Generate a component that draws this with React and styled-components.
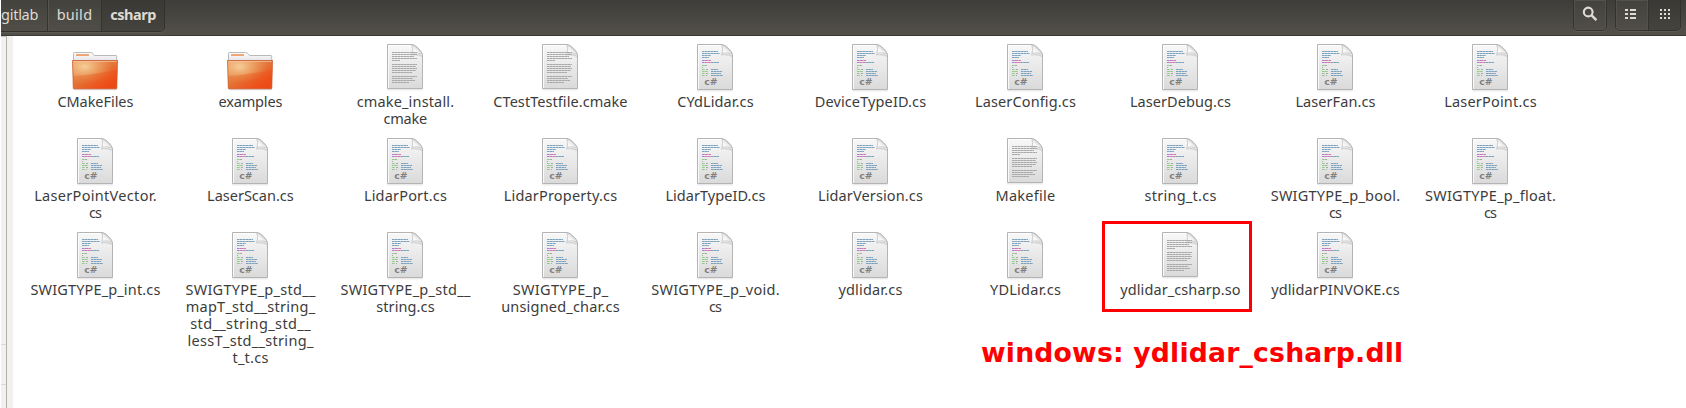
import React from "react";
import styled, { createGlobalStyle, css } from "styled-components";

const FONT = '"Noto Sans", "Open Sans", sans-serif';
const LABEL_SIZE = 14.5;

const GlobalStyle = createGlobalStyle`
  * { box-sizing: border-box; }
  body { margin: 0; background: #fff; overflow: hidden; }
`;

const measure = document.createElement("canvas").getContext("2d");

// Letter spacing that gives a line of text the wanted width.
function tracking(text, width, font) {
  measure.font = font;
  const m = measure.measureText(text);
  const ink = m.actualBoundingBoxRight + m.actualBoundingBoxLeft;
  return (width - ink) / Math.max(1, text.length - 1);
}

const Window = styled.div`
  position: relative;
  display: flex;
  flex-direction: column;
  width: 1686px;
  height: 408px;
  padding-left: 1px;
  overflow: hidden;
  background: #fff;
  font-family: ${FONT};
`;

const Header = styled.header`
  display: flex;
  justify-content: space-between;
  height: 36px;
  flex: none;
  padding-right: 5px;
  background: linear-gradient(#3e3d39, #53504a);
  border-bottom: 1px solid #3a3934;
`;

const PathBar = styled.nav`
  display: flex;
  height: 32px;
  border: solid #32312d;
  border-width: 0 1px 1px 0;
  border-radius: 0 0 5px 0;
  box-shadow: 0 1px 0 #5d5a53;
  overflow: hidden;
`;

const Crumb = styled.button`
  display: flex;
  justify-content: center;
  align-items: flex-start;
  width: ${(p) => p.$width}px;
  padding: 0;
  border: 0;
  border-left: ${(p) => (p.$first ? 0 : "1px solid #34332f")};
  background: linear-gradient(#43423d, #504e47);
  box-shadow: inset 1px 0 0 #57554e;
  color: #dfdbd2;
  font: ${(p) => (p.$active ? 700 : 400)} 14.5px/28px ${FONT};
  white-space: nowrap;
  letter-spacing: ${(p) => p.$tracking}px;
  ${(p) =>
    p.$first &&
    css`
      justify-content: flex-start;
      box-shadow: none;
    `}
  ${(p) =>
    p.$active &&
    css`
      background: linear-gradient(#3a3935, #45433e);
      box-shadow: none;
    `}
`;

const Tools = styled.div`
  display: flex;
  gap: 8px;
`;

const ToolGroup = styled.div`
  display: flex;
  height: 31px;
  border: 1px solid #33322e;
  border-top: 0;
  border-radius: 0 0 5px 5px;
  box-shadow: 0 1px 0 #5d5a53;
  overflow: hidden;
`;

const ToolButton = styled.button`
  display: flex;
  align-items: flex-start;
  justify-content: center;
  width: 32px;
  padding: 5px 0 0;
  border: 0;
  background: ${(p) =>
    p.$active
      ? "linear-gradient(#3a3935, #45433e)"
      : "linear-gradient(#43423d, #504e47)"};
  box-shadow: ${(p) => (p.$active ? "inset 1px 0 0 #34332f" : "inset 0 0 0 1px #53514a")};
`;

const Body = styled.div`
  display: flex;
  flex: 1;
  min-height: 0;
`;

const Sidebar = styled.aside`
  width: 6px;
  padding-top: 98px;
  background: #f2f1f0;
  border-right: 1px solid #b5b2ae;
  border-top: 1px solid #c9c6c2;
`;

const SideRule = styled.div`
  height: 1px;
  margin-top: ${(p) => p.$gap}px;
  background: #dcdad7;
`;

const Gutter = styled.div`
  width: 6px;
  background: #f2f1f0;
`;

const IconGrid = styled.main`
  display: grid;
  grid-template-columns: repeat(10, 155px);
  grid-auto-rows: 94px;
  padding: 6px 0 0 5px;
`;

const Item = styled.div`
  display: flex;
  flex-direction: column;
  align-items: center;
  width: 154px;
  height: 94px;
`;

const Label = styled.div`
  display: flex;
  flex-direction: column;
  align-items: center;
  margin-top: 3px;
  padding-left: 0.8px;
  color: #3c3c3c;
  font-size: ${LABEL_SIZE}px;
  line-height: 17px;
`;

const Line = styled.span`
  white-space: nowrap;
  letter-spacing: ${(p) => p.$tracking}px;
  margin-right: ${(p) => -p.$tracking}px;
`;

const Highlight = styled.div`
  position: absolute;
  left: 1102px;
  top: 221px;
  width: 150px;
  height: 91px;
  border: 3px solid #f00;
`;

const Caption = styled.div`
  position: absolute;
  left: 981px;
  top: 337px;
  color: #f00;
  font: 700 26.67px/32px "DejaVu Sans", sans-serif;
  letter-spacing: ${(p) => p.$tracking}px;
  white-space: nowrap;
`;

const Art = styled.svg`
  display: block;
  flex: none;
  width: 48px;
  height: 48px;
  overflow: visible;
`;

const HiddenDefs = styled.svg`
  position: absolute;
`;

function Defs() {
  return (
    <HiddenDefs width="0" height="0">
      <defs>
        <linearGradient id="paper" x1="0" y1="0" x2="0" y2="1">
          <stop offset="0" stopColor="#f8f8f8" />
          <stop offset="1" stopColor="#dadada" />
        </linearGradient>
        <linearGradient id="curl" x1="0" y1="1" x2="0.7" y2="0.3">
          <stop offset="0" stopColor="#ffffff" />
          <stop offset="0.55" stopColor="#f6f6f6" />
          <stop offset="1" stopColor="#cccccc" />
        </linearGradient>
        <linearGradient id="front" x1="0" y1="0" x2="1" y2="1">
          <stop offset="0" stopColor="#eda568" />
          <stop offset="0.5" stopColor="#e4763a" />
          <stop offset="0.8" stopColor="#ee4f1b" />
          <stop offset="1" stopColor="#dc4a18" />
        </linearGradient>
        <radialGradient id="glow" cx="0.27" cy="0.22" r="0.62">
          <stop offset="0" stopColor="#f5d09a" />
          <stop offset="1" stopColor="#f0a060" stopOpacity="0" />
        </radialGradient>
        <linearGradient id="low" x1="0" y1="0" x2="1" y2="0.6">
          <stop offset="0" stopColor="#dc8a40" stopOpacity="0.5" />
          <stop offset="0.6" stopColor="#ea5a20" stopOpacity="0.5" />
          <stop offset="1" stopColor="#ee4a14" stopOpacity="0.7" />
        </linearGradient>
        <linearGradient id="tab" x1="0" y1="0" x2="0" y2="1">
          <stop offset="0" stopColor="#ffffff" />
          <stop offset="1" stopColor="#e3e3e8" />
        </linearGradient>
      </defs>
    </HiddenDefs>
  );
}

function Folder() {
  return (
    <Art viewBox="0 0 48 48">
      <path d="M3 47.7H46" stroke="#000" strokeOpacity=".13" strokeWidth="1.2" />
      <path d="M2.5 19V11.2Q2.5 10.5 3.2 10.5H19.5Q21 10.5 22 11.7L23.3 13.5H45Q45.7 13.5 45.7 14.2V19Z" fill="url(#tab)" stroke="#b9b9b9" />
      <rect x="5" y="12" width="13" height="2" rx=".6" fill="#f0a474" />
      <path d="M1.5 18.5H46.5L45.8 46.2Q45.7 46.8 45 46.8H3Q2.3 46.8 2.3 46.2Z" fill="url(#front)" />
      <path d="M1.5 18.5H46.5L45.8 46.2Q45.7 46.8 45 46.8H3Q2.3 46.8 2.3 46.2Z" fill="url(#glow)" />
      <path d="M2 34C20 33 34 30 46.2 27.5L45.8 46.5H2.6Z" fill="url(#low)" />
      <path d="M1.5 18.5H46.5L45.8 46.2Q45.7 46.8 45 46.8H3Q2.3 46.8 2.3 46.2Z" fill="none" stroke="#c9582c" strokeOpacity=".75" />
      <path d="M2.5 19.5H45.5" stroke="#f6c49b" strokeOpacity=".7" />
    </Art>
  );
}

function Page({ bottom }) {
  return (
    <>
      <path d={`M6.3 ${bottom + 0.8}H41.8`} stroke="#000" strokeOpacity=".12" />
      <path d={`M6.5 2.5H31.5Q34 3 37.5 6.5Q41 10 41.5 12.5V${bottom - 0.5}H6.5Z`} fill="url(#paper)" stroke="#b4b4b4" />
      <path d={`M7.5 ${bottom - 1}V3.5H30`} fill="none" stroke="#fff" strokeOpacity=".8" />
      <path d="M30 10Q30 13 33 12.2Q38 11.2 41 13.5V15Q37 12.5 30 13.5Z" fill="#000" fillOpacity=".13" />
      <path d="M30.8 2.8Q32.3 6.5 31.2 11.3Q36 9.8 41.3 12.3Q40.5 10 37.3 6.7Q34 3.2 30.8 2.8Z" fill="url(#curl)" stroke="#b2b2b2" strokeWidth=".6" />
    </>
  );
}

function Strokes({ rows }) {
  return rows.map(([y, x1, x2, color], i) => (
    <path key={i} d={`M${x1} ${y + 0.5}H${x2}`} stroke={color} strokeDasharray="2.7 .3" />
  ));
}

const GRAY = "#a8a8a8";
const BLUE = "#7ba3c0";
const GREEN = "#93cc89";
const PURPLE = "#b07ad6";
const PINK = "#d279ae";

const TEXT_ROWS = [
  [10, 11, 36], [12, 11, 36], [14, 11, 33], [16, 11, 36], [18, 11, 19],
  [22, 11, 36], [24, 11, 35], [26, 11, 36], [28, 11, 35], [30, 11, 31],
  [34, 11, 36], [36, 11, 32], [38, 11, 34], [40, 11, 28],
].map((r) => [...r, GRAY]);

const CODE_ROWS = [
  [9, 11, 27, BLUE], [11, 11, 28.5, BLUE], [13, 11, 20, BLUE], [15, 11, 18, BLUE],
  [18, 11, 15, PURPLE], [18, 15, 20, PINK],
  [20, 11, 14, PURPLE], [20, 14, 20, PINK], [20, 20, 28, BLUE],
  [23, 11, 14, GREEN], [23, 14, 16, GRAY], [25, 11, 12, GRAY],
  [27, 11, 14, GREEN], [27, 15, 17, GRAY], [27, 20, 27, BLUE],
  [29, 11, 14, GREEN], [29, 14, 17, GREEN], [29, 20, 31, BLUE],
  [31, 11, 14, GREEN], [31, 15, 17, GRAY], [31, 20, 30, BLUE],
  [33, 11, 14, GREEN], [33, 15, 16, GRAY], [33, 20, 32, BLUE],
];

function TextFile() {
  return (
    <Art viewBox="0 0 48 48">
      <Page bottom={47} />
      <Strokes rows={TEXT_ROWS} />
    </Art>
  );
}

function CodeFile() {
  return (
    <Art viewBox="0 0 48 48">
      <Page bottom={48} />
      <Strokes rows={CODE_ROWS} />
      <text x="13.3" y="43.2" fontFamily="DejaVu Sans, sans-serif" fontWeight="700" fontSize="9.3" fill="#808080">
        c#
      </text>
    </Art>
  );
}

const ICONS = { folder: Folder, text: TextFile, code: CodeFile };

// Each file: icon kind, then its label lines with their widths.
const FILES = [
  ["folder", ["CMakeFiles", 76]],
  ["folder", ["examples", 64]],
  ["text", ["cmake_install.", 96.5], ["cmake", 43.5]],
  ["text", ["CTestTestfile.cmake", 134]],
  ["code", ["CYdLidar.cs", 76.5]],
  ["code", ["DeviceTypeID.cs", 110.5]],
  ["code", ["LaserConfig.cs", 100]],
  ["code", ["LaserDebug.cs", 100]],
  ["code", ["LaserFan.cs", 79]],
  ["code", ["LaserPoint.cs", 91.5]],
  ["code", ["LaserPointVector.", 120.5], ["cs", 13]],
  ["code", ["LaserScan.cs", 85.7]],
  ["code", ["LidarPort.cs", 82]],
  ["code", ["LidarProperty.cs", 112.5]],
  ["code", ["LidarTypeID.cs", 99]],
  ["code", ["LidarVersion.cs", 104]],
  ["text", ["Makefile", 58.5]],
  ["code", ["string_t.cs", 72]],
  ["code", ["SWIGTYPE_p_bool.", 128.5], ["cs", 13]],
  ["code", ["SWIGTYPE_p_float.", 130], ["cs", 13]],
  ["code", ["SWIGTYPE_p_int.cs", 130]],
  [
    "code",
    ["SWIGTYPE_p_std__", 130.5],
    ["mapT_std__string_", 129],
    ["std__string_std__", 121],
    ["lessT_std__string_", 125.5],
    ["t_t.cs", 36],
  ],
  ["code", ["SWIGTYPE_p_std__", 130.5], ["string.cs", 58.5]],
  ["code", ["SWIGTYPE_p_", 96], ["unsigned_char.cs", 117.5]],
  ["code", ["SWIGTYPE_p_void.", 127.5], ["cs", 13]],
  ["code", ["ydlidar.cs", 64]],
  ["code", ["YDLidar.cs", 71]],
  ["text", ["ydlidar_csharp.so", 119.5]],
  ["code", ["ydlidarPINVOKE.cs", 128.5]],
];

const CAPTION = "windows: ydlidar_csharp.dll";
const regular = `${LABEL_SIZE}px ${FONT}`;
const bold = `700 ${LABEL_SIZE}px ${FONT}`;

function SearchIcon() {
  return (
    <svg width="16" height="16" viewBox="0 0 16 16" fill="none" stroke="#dfdbd2">
      <circle cx="6.2" cy="7" r="4.4" strokeWidth="2.1" />
      <path d="M9.4 10.2L14.4 15.2" strokeWidth="2.4" />
    </svg>
  );
}

function ListIcon() {
  return (
    <svg width="16" height="16" viewBox="0 0 16 16" fill="#dfdbd2">
      {[4, 8, 12].map((y) => (
        <path key={y} d={`M1 ${y}h3v2h-3zM6 ${y}h6v2h-6z`} />
      ))}
    </svg>
  );
}

function GridIcon() {
  return (
    <svg width="16" height="16" viewBox="0 0 16 16" fill="#dfdbd2">
      {[4, 8, 12].map((y) => (
        <path key={y} d={`M4 ${y}h2v2h-2zM8 ${y}h2v2h-2zM12 ${y}h2v2h-2z`} />
      ))}
    </svg>
  );
}

export default function App() {
  return (
    <Window>
      <GlobalStyle />
      <Defs />
      <Header>
        <PathBar>
          <Crumb $first $width={46} $tracking={tracking("gitlab", 37.5, regular)}>gitlab</Crumb>
          <Crumb $width={54} $tracking={tracking("build", 33.5, regular)}>build</Crumb>
          <Crumb $active $width={63} $tracking={tracking("csharp", 46, bold)}>csharp</Crumb>
        </PathBar>
        <Tools>
          <ToolGroup>
            <ToolButton><SearchIcon /></ToolButton>
          </ToolGroup>
          <ToolGroup>
            <ToolButton><ListIcon /></ToolButton>
            <ToolButton $active><GridIcon /></ToolButton>
          </ToolGroup>
        </Tools>
      </Header>
      <Body>
        <Sidebar>
          <SideRule $gap={209} />
          <SideRule $gap={39} />
        </Sidebar>
        <Gutter />
        <IconGrid>
          {FILES.map(([kind, ...lines], i) => {
            const Icon = ICONS[kind];
            return (
              <Item key={i}>
                <Icon />
                <Label>
                  {lines.map(([text, width], n) => (
                    <Line key={n} $tracking={tracking(text, width, regular)}>{text}</Line>
                  ))}
                </Label>
              </Item>
            );
          })}
        </IconGrid>
      </Body>
      <Highlight />
      <Caption $tracking={tracking(CAPTION, 420, '700 26.67px "DejaVu Sans"')}>{CAPTION}</Caption>
    </Window>
  );
}
